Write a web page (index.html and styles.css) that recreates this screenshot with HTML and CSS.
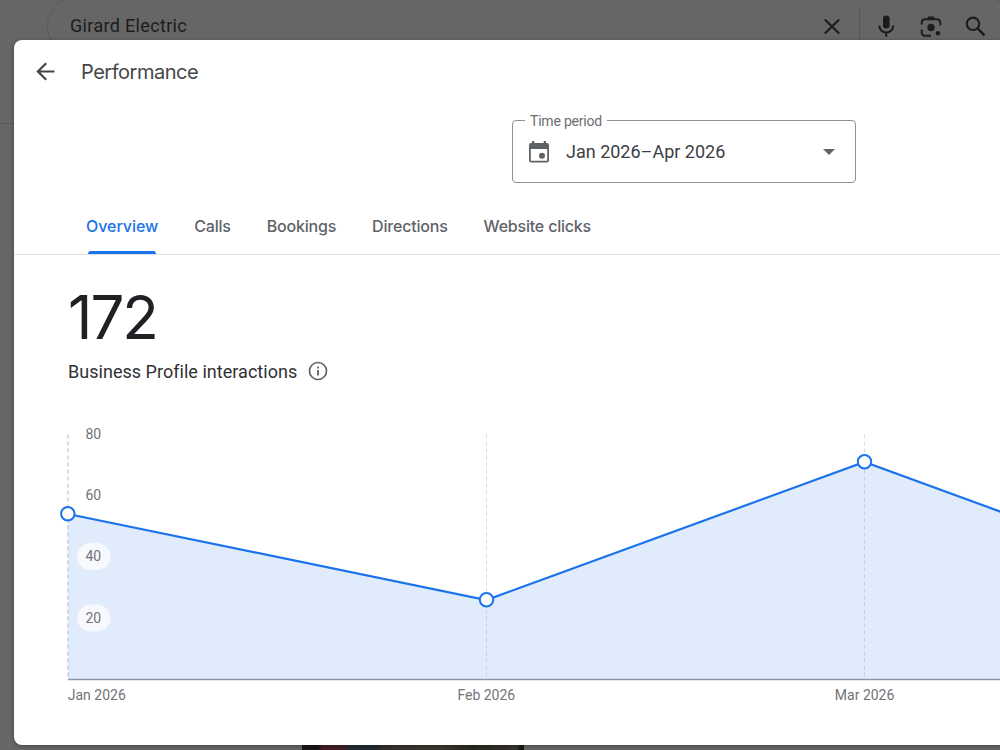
FILE: index.html
```html
<!DOCTYPE html>
<html lang="en">
<head>
  <meta charset="UTF-8">
  <meta name="viewport" content="width=device-width, initial-scale=1.0">
  <title>Performance</title>
  <link rel="stylesheet" href="styles.css">
</head>
<body>
  <header class="search-header">
    <div class="search-box">
      <span class="query">Girard Electric</span>
      <div class="search-icons">
        <svg class="icon" viewBox="0 0 24 24"><path d="M4.9 5.4l14.2 14.2M19.1 5.4L4.9 19.6" fill="none" stroke="#1c1c1c" stroke-width="2.1"/></svg>
        <span class="divider"></span>
        <svg class="icon" viewBox="0 0 24 24"><rect x="9" y="1.6" width="6.6" height="13" rx="3.3"/><path d="M5.3 11.6a7 7 0 0 0 14 0M12.3 18.6v4.2" fill="none" stroke="#1c1c1c" stroke-width="2"/></svg>
        <svg class="icon" viewBox="0 0 24 24"><path d="M2.7 10.500V8.500a3.200 3.200 0 0 1 3.200-3.200h12.200A3.200 3.200 0 0 1 21.300 8.500v3M2.700 15.500v3a3.200 3.200 0 0 0 3.200 3.200H12" fill="none" stroke="#1c1c1c" stroke-width="2"/><path d="M9.200 2.500h5.600l1.400 3H7.800z"/><circle cx="12" cy="13.500" r="3.700"/><circle cx="19" cy="19.300" r="2.300"/></svg>
        <svg class="icon" viewBox="0 0 24 24"><circle cx="10" cy="9.800" r="6.200" fill="none" stroke="#1c1c1c" stroke-width="2.100"/><path d="M14.500 14.300l7 7" stroke="#1c1c1c" stroke-width="2.400"/></svg>
      </div>
    </div>
  </header>
  <div class="results">
    <div class="photo"></div>
  </div>

  <div class="modal">
    <div class="title-bar">
      <svg class="back" viewBox="0 0 20 20"><path d="M18.500 9.500H2.500M10.200 1.200L1.900 9.500l8.300 8.300" fill="none" stroke="#444746" stroke-width="2.200"/></svg>
      <h1>Performance</h1>
    </div>

    <div class="period">
      <span class="period-label">Time period</span>
      <svg class="calendar" viewBox="0 0 22 24"><path fill-rule="evenodd" d="M4 1h2.300v2h9.400V1H18v2h1a2 2 0 0 1 2 2v15.500a2 2 0 0 1-2 2H3a2 2 0 0 1-2-2V5a2 2 0 0 1 2-2h1zM2.800 9v11.700h16.400V9z"/><circle cx="14" cy="15.700" r="3"/></svg>
      <span class="period-value">Jan 2026–Apr 2026</span>
      <span class="caret"></span>
    </div>

    <nav class="tabs">
      <a class="tab active">Overview</a>
      <a class="tab">Calls</a>
      <a class="tab">Bookings</a>
      <a class="tab">Directions</a>
      <a class="tab">Website clicks</a>
    </nav>

    <section class="summary">
      <div class="total">172</div>
      <div class="caption">
        <span>Business Profile interactions</span>
        <svg class="info" viewBox="0 0 20 20"><circle cx="10" cy="10" r="8.500" fill="none" stroke="#5f6368" stroke-width="1.700"/><path d="M10 9v5.400M10 5.400v2" stroke="#5f6368" stroke-width="1.800"/></svg>
      </div>
    </section>

    <svg class="chart" width="946" height="290" viewBox="0 0 946 290">
      <path class="area" d="M14 90L432.500 176L810.500 38L946 87.500V255H14z"/>
      <path class="grid first" d="M14 10.500V255"/>
      <path class="grid" d="M432.500 10.500V255M810.500 10.500V255"/>
      <path class="axis" d="M14 255.500H946"/>
      <path class="line" d="M14 90L432.500 176L810.500 38L960 92.600"/>
      <circle class="point" cx="13.800" cy="89.700" r="6.700"/>
      <circle class="point" cx="432.500" cy="175.700" r="6.700"/>
      <circle class="point" cx="810.500" cy="37.700" r="6.700"/>
      <rect class="pill" x="23" y="119" width="33.500" height="27" rx="13.500"/>
      <rect class="pill" x="23" y="180.500" width="33.500" height="27" rx="13.500"/>
      <g class="label">
        <text x="39.300" y="14.500">80</text>
        <text x="39.300" y="76">60</text>
        <text x="39.300" y="137">40</text>
        <text x="39.300" y="198.500">20</text>
        <text x="42.800" y="276">Jan 2026</text>
        <text x="432.300" y="276">Feb 2026</text>
        <text x="810.600" y="276">Mar 2026</text>
      </g>
    </svg>
  </div>
</body>
</html>
```
FILE: styles.css
```css
* {
  box-sizing: border-box;
}
body {
  margin: 0;
  height: 750px;
  overflow: hidden;
  background-color: #666;
  font-family: Roboto, sans-serif;
  display: flex;
  flex-direction: column;
}
.search-header {
  height: 124px;
  flex-shrink: 0;
  padding-left: 47px;
  border-bottom: 1px solid #595959;
}
.search-box {
  width: 966px;
  height: 60px;
  margin-top: -4px;
  padding: 0 25px 0 22px;
  border: 1px solid #5b5b5b;
  border-radius: 30px;
  display: flex;
  align-items: center;
  justify-content: space-between;
}
.query {
  font-size: 18px;
  line-height: 22px;
  padding-bottom: 1px;
  letter-spacing: 0.33px;
  color: #1c1c1c;
}
.search-icons {
  display: flex;
  align-items: center;
}
.icon {
  width: 24px;
  height: 24px;
  fill: #1c1c1c;
  margin-right: 20.5px;
}
.icon:first-child {
  margin-right: 15px;
}
.icon:last-child {
  margin-right: 0;
}
.divider {
  width: 1px;
  height: 36px;
  margin-right: 14px;
  background-color: #565656;
}
.results {
  flex: 1;
  display: flex;
  align-items: flex-end;
}
.photo {
  width: 222px;
  height: 8px;
  margin-left: 302px;
  background: linear-gradient(90deg, #171515 15px, #421c22 20px, #42202a 42px, #222b35 48px, #24282f 74px, #37312f 84px, #3c372f 140px, #27291f 170px, #393430 215px, #171717 218px);
}
.modal {
  position: absolute;
  top: 40px;
  left: 14px;
  width: 1010px;
  height: 704.5px;
  border-radius: 8px;
  background-color: #fff;
  box-shadow: 0 1px 4px rgba(0, 0, 0, 0.3);
}
.title-bar {
  height: 64px;
  padding-left: 22px;
  display: flex;
  align-items: center;
}
.back {
  width: 20px;
  height: 20px;
  margin-right: 25px;
}
h1 {
  margin: 0;
  font-family: Inter, sans-serif;
  font-size: 20px;
  font-weight: 400;
  letter-spacing: -0.48px;
  color: #444746;
}
.period {
  position: relative;
  width: 344px;
  height: 63px;
  margin: 16px 0 0 498px;
  padding: 0 20px 0 15px;
  border: 1px solid #8f9296;
  border-radius: 4px;
  display: flex;
  align-items: center;
}
.period-label {
  position: absolute;
  top: -9px;
  left: 12px;
  padding: 0 5px;
  background-color: #fff;
  font-size: 14px;
  line-height: 18px;
  letter-spacing: -0.2px;
  color: #6b6e72;
}
.calendar {
  width: 22px;
  height: 24px;
  margin-right: 16px;
  fill: #5f6368;
}
.period-value {
  font-size: 18px;
  color: #3c4043;
}
.caret {
  margin-left: auto;
  border: 6px solid transparent;
  border-top-color: #5f6368;
  border-bottom-width: 0;
}
.tabs {
  height: 72px;
  padding-left: 72px;
  border-bottom: 1px solid #dfe1e4;
  display: flex;
  gap: 36px;
}
.tab {
  position: relative;
  padding-top: 33px;
  font-family: Inter, sans-serif;
  font-size: 16px;
  font-weight: 500;
  line-height: 20px;
  letter-spacing: -0.2px;
  color: #5f6368;
}
.active {
  letter-spacing: -0.05px;
  color: #1a73eb;
}
.active::after {
  content: "";
  position: absolute;
  left: 2px;
  right: 2px;
  bottom: 0;
  height: 3px;
  border-radius: 3px 3px 0 0;
  background-color: #1a73eb;
}
.summary {
  height: 169px;
  padding: 29px 0 0 54px;
}
.total {
  height: 66px;
  font-family: Inter, sans-serif;
  font-size: 60px;
  line-height: 66px;
  letter-spacing: -2px;
  color: #202124;
}
.caption {
  height: 22px;
  margin-top: 10px;
  display: flex;
  align-items: center;
  gap: 11px;
  font-size: 18px;
  letter-spacing: 0.03px;
  color: #303134;
}
.info {
  width: 20px;
  height: 20px;
}
.chart {
  display: block;
  margin-left: 40px;
}
.area {
  fill: #e0ebfc;
}
.grid {
  fill: none;
  stroke: #a0a8b4;
  stroke-opacity: 0.4;
  stroke-width: 1;
  stroke-dasharray: 4 3;
}
.first {
  stroke-width: 2;
}
.axis {
  stroke: #8d97a7;
  stroke-width: 1.5;
}
.line {
  fill: none;
  stroke: #1a73eb;
  stroke-width: 2.2;
}
.point {
  fill: #fff;
  stroke: #1a73eb;
  stroke-width: 2;
}
.pill {
  fill: #f7f9fe;
}
.label {
  font-size: 14px;
  text-anchor: middle;
  fill: #717478;
}
```
